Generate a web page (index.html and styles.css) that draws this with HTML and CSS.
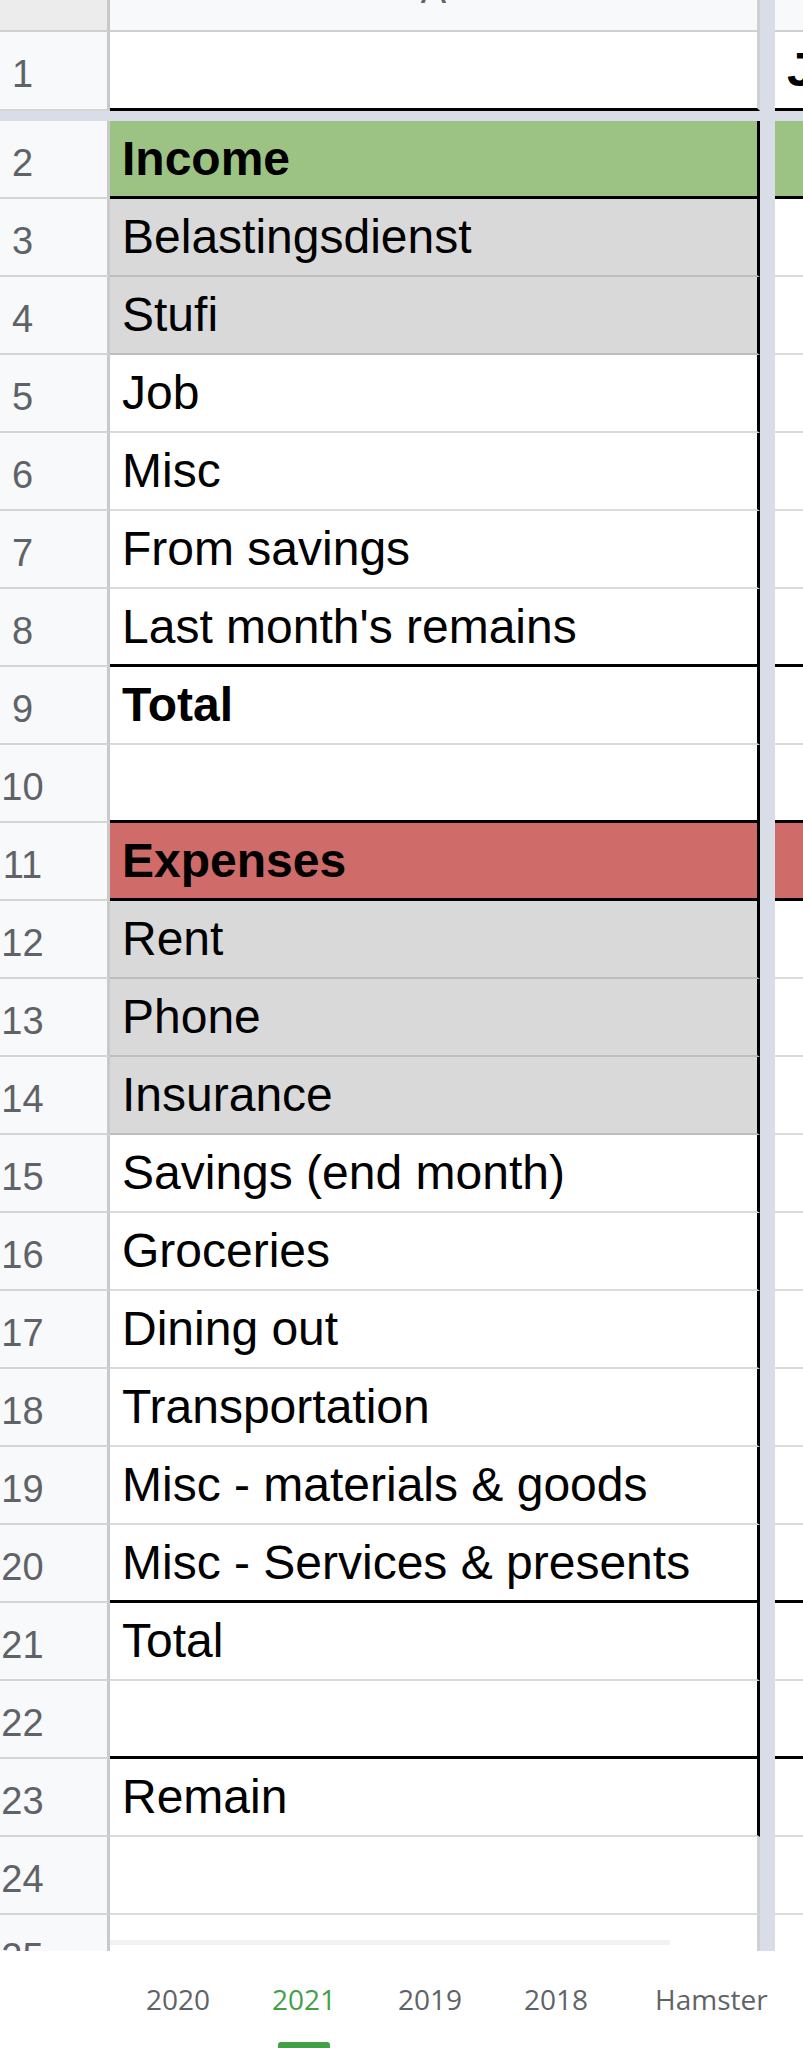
FILE: index.html
```html
<!DOCTYPE html>
<html lang="en">

<head>
  <meta charset="UTF-8">
  <meta name="viewport" content="width=device-width, initial-scale=1.0">
  <title>Budget 2021</title>
  <link rel="stylesheet" href="styles.css">
</head>

<body>
  <div class="sheet">
    <div class="row head">
      <div class="num corner"></div>
      <div class="cell col-label"><span>A</span></div>
      <div class="fz"></div>
      <div class="cell j"></div>
    </div>

    <div class="row first line">
      <div class="num">1</div>
      <div class="cell"></div>
      <div class="fz"></div>
      <div class="cell j strong">Jan</div>
    </div>

    <div class="freeze-h"></div>

    <div class="row edge line green bold">
      <div class="num">2</div>
      <div class="cell">Income</div>
      <div class="fz"></div>
      <div class="cell j"></div>
    </div>
    <div class="row edge gray">
      <div class="num">3</div>
      <div class="cell">Belastingsdienst</div>
      <div class="fz"></div>
      <div class="cell j"></div>
    </div>
    <div class="row edge gray">
      <div class="num">4</div>
      <div class="cell">Stufi</div>
      <div class="fz"></div>
      <div class="cell j"></div>
    </div>
    <div class="row edge">
      <div class="num">5</div>
      <div class="cell">Job</div>
      <div class="fz"></div>
      <div class="cell j"></div>
    </div>
    <div class="row edge">
      <div class="num">6</div>
      <div class="cell">Misc</div>
      <div class="fz"></div>
      <div class="cell j"></div>
    </div>
    <div class="row edge">
      <div class="num">7</div>
      <div class="cell">From savings</div>
      <div class="fz"></div>
      <div class="cell j"></div>
    </div>
    <div class="row edge line">
      <div class="num">8</div>
      <div class="cell">Last month's remains</div>
      <div class="fz"></div>
      <div class="cell j"></div>
    </div>
    <div class="row edge bold">
      <div class="num">9</div>
      <div class="cell">Total</div>
      <div class="fz"></div>
      <div class="cell j"></div>
    </div>
    <div class="row edge line">
      <div class="num">10</div>
      <div class="cell"></div>
      <div class="fz"></div>
      <div class="cell j"></div>
    </div>
    <div class="row edge line red bold">
      <div class="num">11</div>
      <div class="cell">Expenses</div>
      <div class="fz"></div>
      <div class="cell j"></div>
    </div>
    <div class="row edge gray">
      <div class="num">12</div>
      <div class="cell">Rent</div>
      <div class="fz"></div>
      <div class="cell j"></div>
    </div>
    <div class="row edge gray">
      <div class="num">13</div>
      <div class="cell">Phone</div>
      <div class="fz"></div>
      <div class="cell j"></div>
    </div>
    <div class="row edge gray">
      <div class="num">14</div>
      <div class="cell">Insurance</div>
      <div class="fz"></div>
      <div class="cell j"></div>
    </div>
    <div class="row edge">
      <div class="num">15</div>
      <div class="cell">Savings (end month)</div>
      <div class="fz"></div>
      <div class="cell j"></div>
    </div>
    <div class="row edge">
      <div class="num">16</div>
      <div class="cell">Groceries</div>
      <div class="fz"></div>
      <div class="cell j"></div>
    </div>
    <div class="row edge">
      <div class="num">17</div>
      <div class="cell">Dining out</div>
      <div class="fz"></div>
      <div class="cell j"></div>
    </div>
    <div class="row edge">
      <div class="num">18</div>
      <div class="cell">Transportation</div>
      <div class="fz"></div>
      <div class="cell j"></div>
    </div>
    <div class="row edge">
      <div class="num">19</div>
      <div class="cell">Misc - materials &amp; goods</div>
      <div class="fz"></div>
      <div class="cell j"></div>
    </div>
    <div class="row edge line">
      <div class="num">20</div>
      <div class="cell">Misc - Services &amp; presents</div>
      <div class="fz"></div>
      <div class="cell j"></div>
    </div>
    <div class="row edge">
      <div class="num">21</div>
      <div class="cell">Total</div>
      <div class="fz"></div>
      <div class="cell j"></div>
    </div>
    <div class="row edge line">
      <div class="num">22</div>
      <div class="cell"></div>
      <div class="fz"></div>
      <div class="cell j"></div>
    </div>
    <div class="row edge">
      <div class="num">23</div>
      <div class="cell">Remain</div>
      <div class="fz"></div>
      <div class="cell j"></div>
    </div>
    <div class="row">
      <div class="num">24</div>
      <div class="cell"></div>
      <div class="fz"></div>
      <div class="cell j"></div>
    </div>
    <div class="row">
      <div class="num">25</div>
      <div class="cell"></div>
      <div class="fz"></div>
      <div class="cell j"></div>
    </div>

    <!-- overlay scrollbar track -->
    <div class="hscroll"></div>
  </div>

  <nav class="tabs">
    <div class="tab">2020</div>
    <div class="tab active">2021<span class="marker"></span></div>
    <div class="tab">2019</div>
    <div class="tab">2018</div>
    <div class="tab wide">Hamster</div>
  </nav>
</body>

</html>
```

FILE: styles.css
```css
* {
  box-sizing: border-box;
}

body {
  margin: 0;
  width: 803px;
  height: 2048px;
  overflow: hidden;
  background: #fff;
  font-family: "Liberation Sans", Arial, sans-serif;
}

.sheet {
  position: relative;
  height: 1951px;
  overflow: hidden;
}

.row {
  display: grid;
  grid-template-columns: 110px 650px 15px 28px;
  height: 78px;
}

.row.first {
  height: 79px;
}

.num {
  background: #f8f9fa;
  border-right: 3px solid #c9c9c9;
  border-bottom: 2px solid #d5d5d5;
  padding-right: 62px;
  text-align: center;
  color: #5f6368;
  font-size: 38px;
  line-height: 84px;
  overflow: hidden;
}

.cell {
  background: #fff;
  border-right: 3px solid #d0d0d0;
  border-bottom: 2px solid #dadada;
  padding-left: 12px;
  color: #000;
  font-size: 48px;
  line-height: 75px;
  white-space: nowrap;
  overflow: hidden;
}

.cell.j {
  border-right: none;
}

.cell.strong {
  font-weight: bold;
}

.fz {
  background: #d9dde7;
}

.freeze-h {
  height: 10px;
  background: #d9dde7;
}

/* column header row */
.row.head {
  height: 32px;
}

.head .num,
.head .cell {
  background: #f8f9fa;
  border-bottom: 2px solid #cfcfcf;
}

.head .num.corner {
  background: #ececec;
}

.col-label {
  text-align: center;
  padding-left: 0;
  color: #5f6368;
}

.col-label span {
  display: block;
  margin-top: -30px;
  font-size: 38px;
  line-height: 40px;
}

/* cell formats */
.edge .cell {
  border-right-color: #000;
}

.edge .cell.j {
  border-right: none;
}

.line .cell {
  border-bottom: 3px solid #000;
}

.bold .cell {
  font-weight: bold;
}

.gray .cell {
  background: #d9d9d9;
  border-bottom-color: #bdbdbd;
}

.gray .cell.j {
  background: #fff;
  border-bottom-color: #dadada;
}

.green .cell,
.green .cell.j {
  background: #9dc384;
}

.red .cell,
.red .cell.j {
  background: #cf6b68;
}

.hscroll {
  position: absolute;
  left: 110px;
  top: 1940px;
  width: 560px;
  height: 5px;
  background: #f2f2f2;
}

/* sheet tabs */
.tabs {
  display: flex;
  height: 97px;
  padding-left: 115px;
  background: #fff;
  font-family: "Open Sans", sans-serif;
  font-size: 28px;
}

.tab {
  display: flex;
  flex-direction: column;
  align-items: center;
  width: 126px;
  padding-top: 29px;
  line-height: 38px;
  color: #5f6368;
}

.tab.wide {
  width: auto;
  padding-left: 36px;
}

.tab.active {
  color: #43a047;
}

.marker {
  width: 52px;
  height: 6px;
  margin-top: 24px;
  background: #43a047;
  border-radius: 3px 3px 0 0;
}
```
